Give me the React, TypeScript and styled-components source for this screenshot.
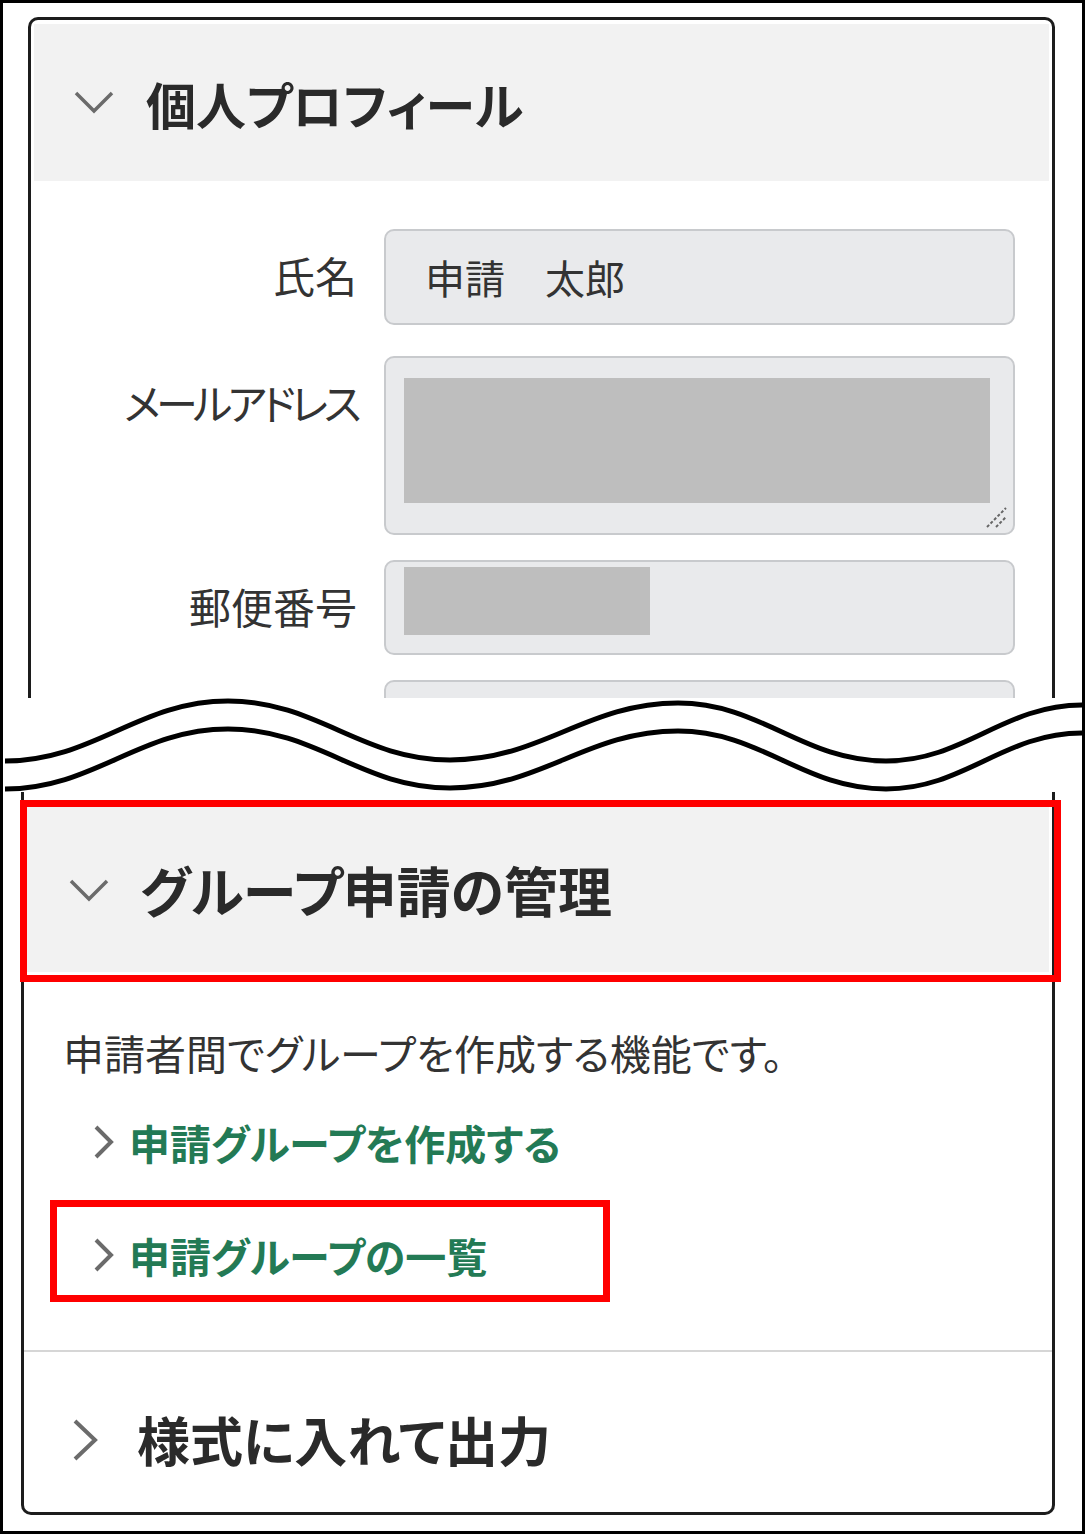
import React from 'react'
import styled, { createGlobalStyle } from 'styled-components'

const GlobalStyle = createGlobalStyle`
  html, body {
    margin: 0;
    padding: 0;
    background: #ffffff;
  }
  body {
    font-family: "Noto Sans CJK JP", "Noto Sans", sans-serif;
    font-feature-settings: "palt";
    color: #333333;
  }
`

// wave path through alternating troughs/peaks
const wavePath = (pts: [number, number][]) => {
  let d = `M${pts[0][0]},${pts[0][1]}`
  for (let i = 1; i < pts.length; i++) {
    const [x0, y0] = pts[i - 1]
    const [x1, y1] = pts[i]
    const k = (x1 - x0) * 0.4
    d += ` C${x0 + k},${y0} ${x1 - k},${y1} ${x1},${y1}`
  }
  return d
}

const topWave: [number, number][] = [
  [2, 63],
  [225, 3],
  [447, 62],
  [675, 5],
  [883, 63],
  [1079, 7],
]
const bottomWave = topWave.map(([x, y]) => [x, y + 28] as [number, number])

const ChevronDown = () => (
  <svg width="42" height="25" viewBox="0 0 42 25">
    <polyline
      points="3,3 21,21 39,3"
      fill="none"
      stroke="#6b6b6b"
      strokeWidth="3.5"
    />
  </svg>
)

const ChevronRight = ({ w, h }: { w: number; h: number }) => (
  <svg width={w} height={h} viewBox={`0 0 ${w} ${h}`}>
    <polyline
      points={`3,3 ${w - 4},${h / 2} 3,${h - 3}`}
      fill="none"
      stroke="#6b6b6b"
      strokeWidth="4"
    />
  </svg>
)

const ResizeGrip = () => (
  <StyledGrip width="24" height="24" viewBox="0 0 24 24">
    <line x1="3" y1="22" x2="22" y2="3" stroke="#666" strokeWidth="2" strokeDasharray="3 2" />
    <line x1="12" y1="22" x2="22" y2="12" stroke="#666" strokeWidth="2" strokeDasharray="3 2" />
  </StyledGrip>
)

const App = () => {
  return (
    <>
      <GlobalStyle />
      <StyledPage>
        <StyledTopPart>
          <StyledTopCard>
            <StyledHeader $height={157}>
              <ChevronDown />
              <StyledTitle $size={50}>個人プロフィール</StyledTitle>
            </StyledHeader>
            <StyledForm>
              <StyledRow $top={0}>
                <StyledLabel>氏名</StyledLabel>
                <StyledField $height={96} $pad="0 0 0 39px">
                  <StyledValue>申請　太郎</StyledValue>
                </StyledField>
              </StyledRow>
              <StyledRow $top={31}>
                <StyledLabel $tight>メールアドレス</StyledLabel>
                <StyledField $height={179} $pad="20px 23px 0 18px">
                  <StyledRedact $width="100%" $height={125} />
                  <ResizeGrip />
                </StyledField>
              </StyledRow>
              <StyledRow $top={25}>
                <StyledLabel>郵便番号</StyledLabel>
                <StyledField $height={95} $pad="5px 0 0 18px">
                  <StyledRedact $width="246px" $height={68} />
                </StyledField>
              </StyledRow>
              <StyledRow $top={25}>
                <StyledLabel />
                <StyledField $height={96} $pad="0" />
              </StyledRow>
            </StyledForm>
          </StyledTopCard>
        </StyledTopPart>

        <StyledWave>
          <svg width="1079" height="94" viewBox="0 0 1079 94" overflow="visible">
            <path d={wavePath(topWave)} fill="none" stroke="#000" strokeWidth="5" />
            <path d={wavePath(bottomWave)} fill="none" stroke="#000" strokeWidth="5" />
          </svg>
        </StyledWave>

        <StyledBottomPart>
          <StyledBottomCard>
            <StyledGroupHeader>
              <ChevronDown />
              <StyledTitle $size={54}>グループ申請の管理</StyledTitle>
            </StyledGroupHeader>
            <StyledBody>
              <StyledDescription>申請者間でグループを作成する機能です。</StyledDescription>
              <StyledLinkRow $top={30}>
                <ChevronRight w={22} h={36} />
                <StyledLink>申請グループを作成する</StyledLink>
              </StyledLinkRow>
              <StyledLinkRow $top={53}>
                <ChevronRight w={22} h={36} />
                <StyledLink>申請グループの一覧</StyledLink>
              </StyledLinkRow>
            </StyledBody>
            <StyledSeparator />
            <StyledCollapsedRow>
              <ChevronRight w={27} h={44} />
              <StyledTitle $size={53}>様式に入れて出力</StyledTitle>
            </StyledCollapsedRow>
          </StyledBottomCard>
          <StyledRedBox $left={17} $top={8} $width={1041} $height={182} />
          <StyledRedBox $left={47} $top={408} $width={560} $height={102} />
        </StyledBottomPart>
      </StyledPage>
    </>
  )
}

const StyledPage = styled.div`
  width: 1085px;
  height: 1534px;
  box-sizing: border-box;
  border: 3px solid #000000;
  background: #ffffff;
  display: flex;
  flex-direction: column;
`

const StyledTopPart = styled.div`
  height: 695px;
  overflow: hidden;
  box-sizing: border-box;
  padding: 14px 27px 0 25px;
`

const StyledTopCard = styled.div`
  border: 3px solid #1c1c1c;
  border-bottom: none;
  border-radius: 10px 10px 0 0;
  padding: 4px 3px 0;
  height: 760px;
`

const StyledHeader = styled.div<{ $height: number }>`
  height: ${({ $height }) => $height}px;
  background: #f2f2f2;
  display: flex;
  align-items: center;
  padding-left: 39px;
  gap: 31px;
  padding-top: 0;
  box-sizing: border-box;
`

const StyledTitle = styled.h2<{ $size: number }>`
  margin: 0;
  font-size: ${({ $size }) => $size}px;
  font-weight: 700;
  color: #2a2a2a;
  line-height: 1.2;
`

const StyledForm = styled.div`
  margin-top: 48px;
  display: flex;
  flex-direction: column;
`

const StyledRow = styled.div<{ $top: number }>`
  display: grid;
  grid-template-columns: 323px 631px;
  column-gap: 27px;
  align-items: start;
  margin-top: ${({ $top }) => $top}px;
`

const StyledLabel = styled.div<{ $tight?: boolean }>`
  font-size: 42px;
  line-height: 92px;
  text-align: right;
  color: #333333;
  letter-spacing: ${({ $tight }) => ($tight ? '-4.5px' : '0')};
`

const StyledField = styled.div<{ $height: number; $pad: string }>`
  position: relative;
  height: ${({ $height }) => $height}px;
  box-sizing: border-box;
  padding: ${({ $pad }) => $pad};
  background: #e9eaec;
  border: 2px solid #c8cacd;
  border-radius: 10px;
  display: flex;
  align-items: ${({ $pad }) => ($pad.startsWith('0 ') ? 'center' : 'flex-start')};
`

const StyledValue = styled.span`
  font-size: 40px;
  color: #333333;
`

const StyledRedact = styled.div<{ $width: string; $height: number }>`
  width: ${({ $width }) => $width};
  height: ${({ $height }) => $height}px;
  background: #bebebe;
`

const StyledGrip = styled.svg`
  position: absolute;
  right: 5px;
  bottom: 4px;
`

const StyledWave = styled.div`
  height: 94px;
  background: #ffffff;
  position: relative;
  z-index: 1;

  svg {
    display: block;
  }
`

const StyledBottomPart = styled.div`
  position: relative;
  flex: 1;
  padding: 0 27px 0 18px;
`

const StyledBottomCard = styled.div`
  height: 723px;
  box-sizing: border-box;
  border: 3px solid #1c1c1c;
  border-top: none;
  border-radius: 0 0 10px 10px;
  display: flex;
  flex-direction: column;
`

const StyledGroupHeader = styled.div`
  margin: 10px 3px 0;
  height: 170px;
  box-sizing: border-box;
  padding: 6px 0 0 41px;
  background: #f2f2f2;
  display: flex;
  align-items: center;
  gap: 30px;
`

const StyledBody = styled.div`
  padding-left: 39px;
`

const StyledDescription = styled.p`
  margin: 50px 0 0;
  font-size: 41px;
  line-height: 60px;
  color: #333333;
`

const StyledLinkRow = styled.div<{ $top: number }>`
  margin: ${({ $top }) => $top}px 0 0 30px;
  height: 60px;
  display: flex;
  align-items: center;
  gap: 14px;
`

const StyledLink = styled.a`
  font-size: 41px;
  font-weight: 700;
  color: #237a55;
  text-decoration: none;
  line-height: 60px;
`

const StyledSeparator = styled.hr`
  margin: 65px 0 0;
  border: none;
  height: 2px;
  background: #d6d6d6;
`

const StyledCollapsedRow = styled.div`
  flex: 1;
  display: flex;
  align-items: center;
  padding: 16px 0 0 48px;
  gap: 38px;
`

const StyledRedBox = styled.div<{
  $left: number
  $top: number
  $width: number
  $height: number
}>`
  position: absolute;
  left: ${({ $left }) => $left}px;
  top: ${({ $top }) => $top}px;
  width: ${({ $width }) => $width}px;
  height: ${({ $height }) => $height}px;
  box-sizing: border-box;
  border: 7px solid #ff0000;
  pointer-events: none;
`

export default App
